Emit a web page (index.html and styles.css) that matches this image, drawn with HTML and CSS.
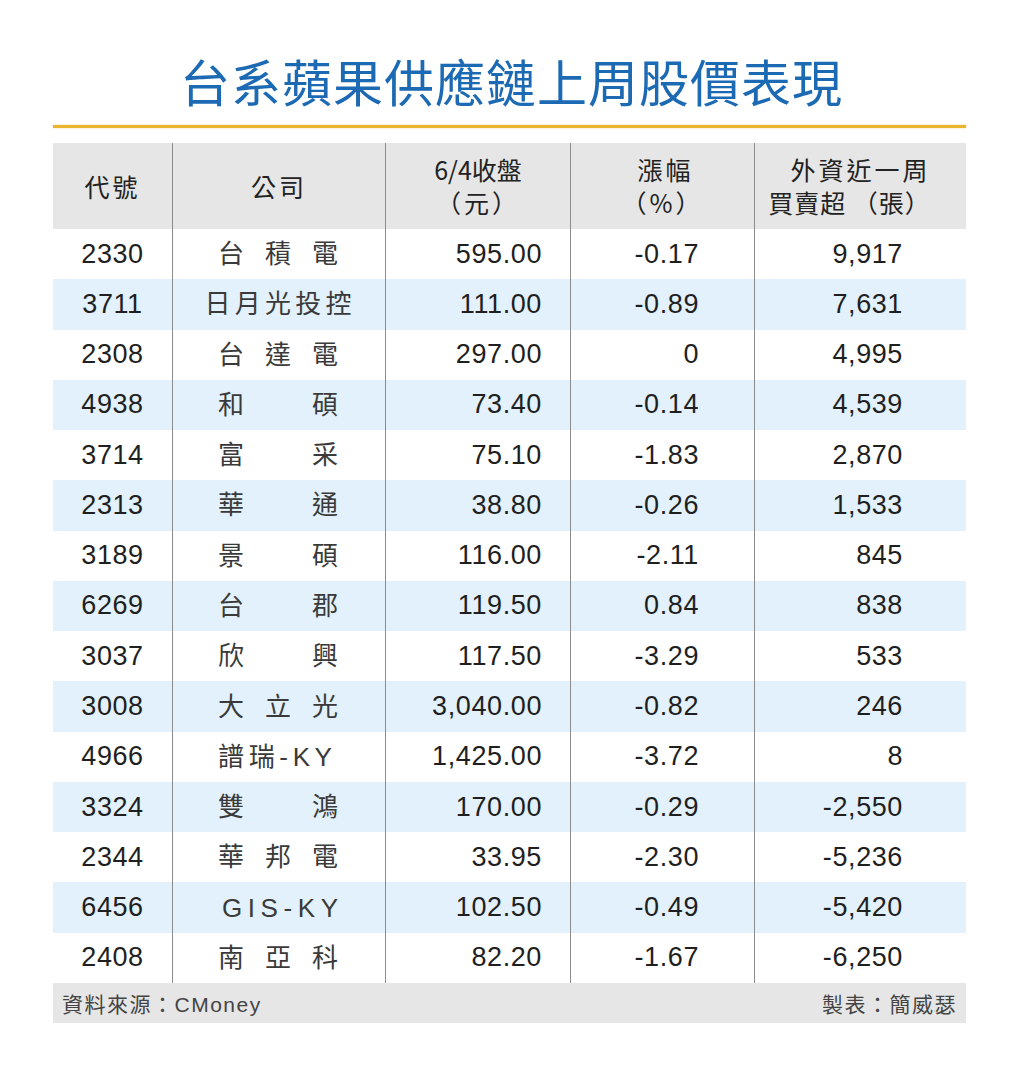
FILE: index.html
```html
<!DOCTYPE html>
<html lang="zh-Hant">
<head>
<meta charset="utf-8">
<title>台系蘋果供應鏈上周股價表現</title>
<link rel="stylesheet" href="styles.css">
</head>
<body>
<div class="page">
  <h1 class="title">台系蘋果供應鏈上周股價表現</h1>
  <div class="rule"></div>
  <div class="table">
    <div class="row head">
      <div class="c c1">代號</div>
      <div class="c c2">公司</div>
      <div class="c c3 h2l"><span class="close">6/4收盤</span><span>（元）</span></div>
      <div class="c c4 h2l"><span>漲幅</span><span>（%）</span></div>
      <div class="c c5 h2l"><span>外資近一周</span><span>買賣超 （張）</span></div>
    </div>

    <div class="row"><div class="c c1">2330</div><div class="c c2"><span class="nm"><span>台</span><span>積</span><span>電</span></span></div><div class="c c3">595.00</div><div class="c c4">-0.17</div><div class="c c5">9,917</div></div>
    <div class="row alt"><div class="c c1">3711</div><div class="c c2"><span class="nm nm5"><span>日</span><span>月</span><span>光</span><span>投</span><span>控</span></span></div><div class="c c3">111.00</div><div class="c c4">-0.89</div><div class="c c5">7,631</div></div>
    <div class="row"><div class="c c1">2308</div><div class="c c2"><span class="nm"><span>台</span><span>達</span><span>電</span></span></div><div class="c c3">297.00</div><div class="c c4">0</div><div class="c c5">4,995</div></div>
    <div class="row alt"><div class="c c1">4938</div><div class="c c2"><span class="nm"><span>和</span><span>碩</span></span></div><div class="c c3">73.40</div><div class="c c4">-0.14</div><div class="c c5">4,539</div></div>
    <div class="row"><div class="c c1">3714</div><div class="c c2"><span class="nm"><span>富</span><span>采</span></span></div><div class="c c3">75.10</div><div class="c c4">-1.83</div><div class="c c5">2,870</div></div>
    <div class="row alt"><div class="c c1">2313</div><div class="c c2"><span class="nm"><span>華</span><span>通</span></span></div><div class="c c3">38.80</div><div class="c c4">-0.26</div><div class="c c5">1,533</div></div>
    <div class="row"><div class="c c1">3189</div><div class="c c2"><span class="nm"><span>景</span><span>碩</span></span></div><div class="c c3">116.00</div><div class="c c4">-2.11</div><div class="c c5">845</div></div>
    <div class="row alt"><div class="c c1">6269</div><div class="c c2"><span class="nm"><span>台</span><span>郡</span></span></div><div class="c c3">119.50</div><div class="c c4">0.84</div><div class="c c5">838</div></div>
    <div class="row"><div class="c c1">3037</div><div class="c c2"><span class="nm"><span>欣</span><span>興</span></span></div><div class="c c3">117.50</div><div class="c c4">-3.29</div><div class="c c5">533</div></div>
    <div class="row alt"><div class="c c1">3008</div><div class="c c2"><span class="nm"><span>大</span><span>立</span><span>光</span></span></div><div class="c c3">3,040.00</div><div class="c c4">-0.82</div><div class="c c5">246</div></div>
    <div class="row"><div class="c c1">4966</div><div class="c c2"><span class="nm nm-ky"><span>譜</span><span>瑞</span><span>-</span><span>K</span><span>Y</span></span></div><div class="c c3">1,425.00</div><div class="c c4">-3.72</div><div class="c c5">8</div></div>
    <div class="row alt"><div class="c c1">3324</div><div class="c c2"><span class="nm"><span>雙</span><span>鴻</span></span></div><div class="c c3">170.00</div><div class="c c4">-0.29</div><div class="c c5">-2,550</div></div>
    <div class="row"><div class="c c1">2344</div><div class="c c2"><span class="nm"><span>華</span><span>邦</span><span>電</span></span></div><div class="c c3">33.95</div><div class="c c4">-2.30</div><div class="c c5">-5,236</div></div>
    <div class="row alt"><div class="c c1">6456</div><div class="c c2"><span class="nm nm-gis"><span>G</span><span>I</span><span>S</span><span>-</span><span>K</span><span>Y</span></span></div><div class="c c3">102.50</div><div class="c c4">-0.49</div><div class="c c5">-5,420</div></div>
    <div class="row"><div class="c c1">2408</div><div class="c c2"><span class="nm"><span>南</span><span>亞</span><span>科</span></span></div><div class="c c3">82.20</div><div class="c c4">-1.67</div><div class="c c5">-6,250</div></div>
  </div>
  <div class="foot">
    <span>資料來源：CMoney</span>
    <span class="by">製表：簡威瑟</span>
  </div>
</div>
</body>
</html>
```

FILE: styles.css
```css
* { box-sizing: border-box; }
html, body {
  margin: 0;
  padding: 0;
  background: #ffffff;
}
body {
  font-family: "Liberation Sans", "Noto Sans CJK TC", sans-serif;
  color: #1f1f1f;
}
.page {
  width: 913px;
  margin-left: 53px;
  padding-top: 50px;
}
.title {
  margin: 0;
  height: 60px;
  line-height: 60px;
  font-family: "Noto Sans CJK TC", sans-serif;
  font-size: 50px;
  font-weight: 400;
  letter-spacing: 1px;
  text-align: center;
  color: #1c69b4;
  padding-left: 4px;
}
.rule {
  margin-top: 15px;
  height: 3px;
  background: #e8b52c;
  box-shadow: 0 0 2px rgba(232, 181, 44, 0.5);
}
.table {
  margin-top: 15px;
}
.row {
  display: grid;
  grid-template-columns: 119px 213px 185px 184px 212px;
  height: 50.27px;
  background: #ffffff;
}
.row.alt {
  background: #e2f1fb;
}
.row.head {
  height: 86px;
  background: #e6e6e6;
}
.c {
  display: flex;
  align-items: center;
  font-size: 27px;
  letter-spacing: 0.6px;
  line-height: 1;
  color: #1f1f1f;
}
.c2, .c3, .c4, .c5 {
  border-left: 1px solid #8c8c8c;
}
.c1 { justify-content: center; }
.c2 { justify-content: center; padding-right: 2px; letter-spacing: 0; }
.c3 { justify-content: flex-end; padding-right: 28px; }
.c4 { justify-content: flex-end; padding-right: 55px; }
.c5 { justify-content: flex-end; padding-right: 63px; }

.head .c {
  justify-content: center;
  padding-right: 0;
  font-family: "Noto Sans CJK TC", sans-serif;
  font-size: 25px;
  font-weight: 400;
  letter-spacing: 3px;
  color: #222222;
}
.head .h2l {
  flex-direction: column;
  line-height: 33px;
}
.head .c3 .close { letter-spacing: 0; }
.head .c4 span:first-child { padding-left: 6px; }
.head .c5 span:last-child { letter-spacing: 1px; margin-right: 22px; }

.nm {
  display: flex;
  justify-content: space-between;
  width: 120px;
  font-size: 26px;
  color: #3a3a3a;
}
.nm5 { width: 147px; }
.nm-ky { width: 114px; margin-right: 6px; }
.nm-gis { width: 116px; margin-left: 4px; }

.foot {
  display: flex;
  justify-content: space-between;
  align-items: center;
  height: 40px;
  background: #e6e6e6;
  padding: 0 9px 0 9px;
  font-size: 21px;
  letter-spacing: 1.5px;
  color: #444444;
}
```
